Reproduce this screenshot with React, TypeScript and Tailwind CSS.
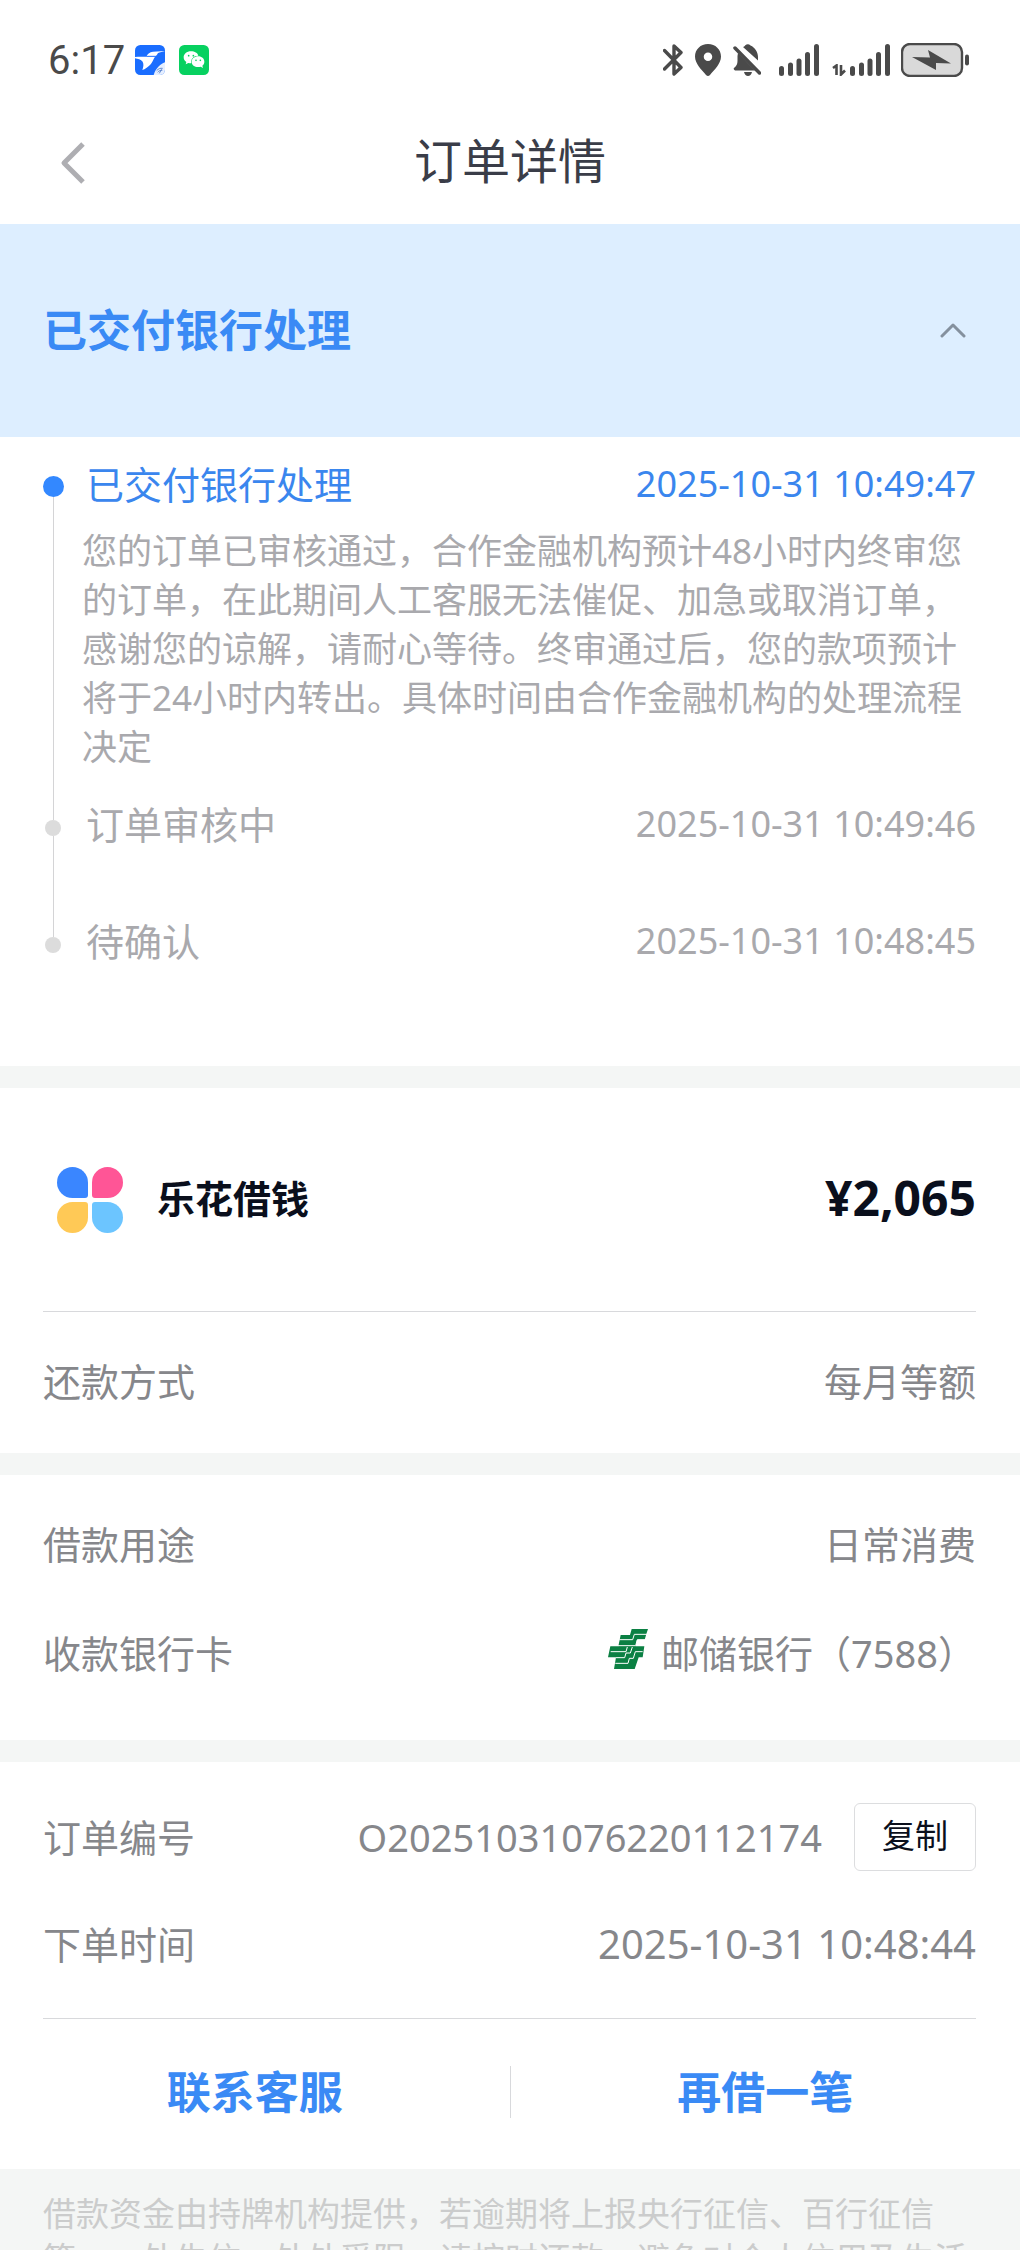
import type { ReactNode } from "react";

const STEPS = [
  {
    title: "已交付银行处理",
    time: "2025-10-31 10:49:47",
    active: true,
    detail:
      "您的订单已审核通过，合作金融机构预计48小时内终审您的订单，在此期间人工客服无法催促、加急或取消订单，感谢您的谅解，请耐心等待。终审通过后，您的款项预计将于24小时内转出。具体时间由合作金融机构的处理流程决定",
  },
  { title: "订单审核中", time: "2025-10-31 10:49:46" },
  { title: "待确认", time: "2025-10-31 10:48:45" },
];

function SignalBars() {
  return (
    <svg width="41" height="32" viewBox="0 0 41 32" fill="#4a4a4a" aria-hidden="true">
      <rect x="0" y="22" width="5" height="10" rx="2.5" />
      <rect x="9" y="18.5" width="5" height="13.5" rx="2.5" />
      <rect x="17.5" y="14.5" width="5" height="17.5" rx="2.5" />
      <rect x="26" y="8" width="5" height="24" rx="2.5" />
      <rect x="35" y="0" width="5" height="32" rx="2.5" />
    </svg>
  );
}

function StatusBar() {
  return (
    <div className="flex h-[120px] items-center justify-between pr-[50px] pl-12">
      <div className="flex items-center">
        <span className="w-[87px] pt-0.5 font-['Roboto',sans-serif] text-[40px] leading-[48px] text-[#4a4a4a]">
          6:17
        </span>
        <svg width="30" height="30" viewBox="0 0 90 90" aria-hidden="true">
          <defs>
            <clipPath id="tile">
              <rect width="90" height="90" rx="16" />
            </clipPath>
          </defs>
          <g clipPath="url(#tile)">
            <rect width="90" height="90" fill="#1a6dff" />
            <path
              d="M0 36C12 35 24 36 34 35C36 27 44 21 54 20L90 18C84 20 74 22 69 24C66 32 58 36 55 44C50 56 40 68 22 75C25 66 27 58 23 50C18 43 8 42 0 40Z"
              fill="#fff"
            />
            <path d="M34 34H64" stroke="#1a6dff" strokeWidth="3" />
            <path d="M90 52C76 57 62 70 56 90H90Z" fill="#e6efff" />
            <path
              d="M65 77C70 71 76 69 83 70M68 82C72 77 77 75 82 76M73 85L80 73"
              fill="none"
              stroke="#4a78c8"
              strokeWidth="2.5"
            />
          </g>
        </svg>
        <svg className="ml-3.5" width="30" height="30" viewBox="0 0 90 90" aria-hidden="true">
          <rect width="90" height="90" rx="16" fill="#07d160" />
          <path
            d="M36 19C23 19 14 27 14 37C14 43 17 48 22 51L20 58L28 54C31 55 34 55 37 55C34 42 44 32 58 32C56 24 47 19 36 19Z"
            fill="#fff"
          />
          <path
            d="M58 34C47 34 38 41 38 50C38 60 47 66 57 66C60 66 63 66 65 65L72 69L70 62C74 59 76 55 76 50C76 41 68 34 58 34Z"
            fill="#fff"
          />
          <g fill="#07d160">
            <circle cx="29" cy="32" r="2.5" />
            <circle cx="43" cy="32" r="2.5" />
            <circle cx="51" cy="46" r="2.5" />
            <circle cx="64" cy="46" r="2.5" />
          </g>
        </svg>
      </div>
      <div className="flex items-center">
        <svg width="20" height="32" viewBox="0 0 20 32" fill="none" stroke="#4a4a4a" aria-hidden="true">
          <path
            d="M1.500 6.500L18 23.500L11 30V2L18 8.500L1.500 25"
            strokeWidth="3.400"
            strokeLinejoin="round"
            strokeLinecap="round"
          />
        </svg>
        <svg className="ml-3" width="26" height="32" viewBox="0 0 26 32" aria-hidden="true">
          <path
            fillRule="evenodd"
            d="M13 0C5.500 0 0 5.500 0 12.500C0 20 7 26 11 31Q13 33 15 31C19 26 26 20 26 12.500C26 5.500 20.500 0 13 0ZM13 8.500A4.200 4.200 0 1 1 13 17A4.200 4.200 0 1 1 13 8.500Z"
            fill="#4a4a4a"
          />
        </svg>
        <svg className="ml-3" width="28" height="32" viewBox="0 0 28 32" fill="#4a4a4a" aria-hidden="true">
          <path d="M10 3C11 2.500 12 2 12 1.500Q15-1 17.500 1.500C22 3.500 25 8 25 13V16.500Z" />
          <path d="M5 9L22 26.500H2Q-0.500 25 1.500 23.500Q4.500 21 4.500 17V12Z" />
          <path d="M11 28H19Q18 32 15 32T11 28Z" />
          <path d="M2 4L26.500 29" stroke="#4a4a4a" strokeWidth="3.500" strokeLinecap="round" />
        </svg>
        <span className="ml-[18px]">
          <SignalBars />
        </span>
        <svg className="ml-3 mt-5" width="14" height="12" viewBox="0 0 14 12" fill="none" stroke="#4a4a4a" aria-hidden="true">
          <path d="M1 4L4.500 1.500V11M9 1V10.500L13 6.500" strokeWidth="2.600" />
        </svg>
        <span className="ml-1">
          <SignalBars />
        </span>
        <svg className="ml-2.5" width="69" height="34" viewBox="0 0 69 34" aria-hidden="true">
          <rect x="1" y="1" width="60" height="32" rx="8" fill="#d9d9d9" stroke="#4a4a4a" strokeWidth="2.400" />
          <path d="M11 14L29 14.500L27 7L50 20.500L35 20L35 27Z" fill="#4a4a4a" />
          <rect x="64" y="11.500" width="4" height="11" rx="2" fill="#4a4a4a" />
        </svg>
      </div>
    </div>
  );
}

function PetalLogo() {
  return (
    <svg width="66" height="66" viewBox="0 0 66 66" aria-hidden="true">
      <path d="M15.500 0A15.500 15.500 0 0 1 31 15.500V28Q31 31 28 31H15.500A15.500 15.500 0 0 1 15.500 0Z" fill="#3a86ff" />
      <path d="M50.500 0A15.500 15.500 0 0 0 35 15.500V28Q35 31 38 31H50.500A15.500 15.500 0 0 0 50.500 0Z" fill="#ff5596" />
      <path d="M15.500 66A15.500 15.500 0 0 0 31 50.500V38Q31 35 28 35H15.500A15.500 15.500 0 0 0 15.500 66Z" fill="#ffc956" />
      <path d="M50.500 66A15.500 15.500 0 0 1 35 50.500V38Q35 35 38 35H50.500A15.500 15.500 0 0 1 50.500 66Z" fill="#6cc5ff" />
    </svg>
  );
}

function PostBankLogo() {
  return (
    <svg width="40" height="40" viewBox="0 0 120 120" aria-hidden="true">
      <path
        d="M71 0H120L115 15L110 32H87L84 46L83 52H109L104 85H92L88 97L80 120H18L24 85H0L7 52H31L38 18H66Z"
        fill="#0b8043"
      />
      <g fill="none" stroke="#fff" strokeWidth="3">
        <path d="M118 16H79L74 32H34" />
        <path d="M112 32H88L83 50H30" />
        <path d="M8 68H54L58 54M73 54L67 72H54L50 86H24" />
        <path d="M104 68H82L76 88H64L60 103H22" />
      </g>
    </svg>
  );
}

function Row({ label, children }: { label: string; children: ReactNode }) {
  return (
    <>
      <dt>{label}</dt>
      <dd className="flex items-center justify-end">{children}</dd>
    </>
  );
}

function Timeline() {
  return (
    <ol className="pt-[21px] pr-11 pl-[43px]">
      {STEPS.map((step, index) => {
        const last = index === STEPS.length - 1;
        return (
          <li
            key={step.title}
            className={`flex gap-[19px] ${step.active ? "text-[#3a86ee]" : last ? "min-h-[151px] text-[#a9a9ad]" : "min-h-[117px] text-[#a9a9ad]"}`}
          >
            <div className="flex w-5 shrink-0 flex-col items-center">
              {step.active ? (
                <>
                  <span className="h-[18px]" />
                  <span className="size-[21px] rounded-full bg-[#3388ff]" />
                </>
              ) : (
                <>
                  <span className="h-[22px] w-px bg-[#d4d4d6]" />
                  <span className="size-4 rounded-full bg-[#dcdcdc]" />
                </>
              )}
              {!last && <span className="w-px flex-1 bg-[#d4d4d6]" />}
            </div>
            <div className="flex-1">
              <div className="flex h-[54px] items-center justify-between pb-0.5 pl-1">
                <h3 className="text-[38px]">{step.title}</h3>
                <time className="text-[36px]">{step.time}</time>
              </div>
              {step.detail && (
                <p className="mt-3.5 pb-[27px] text-[35px] leading-[49px] text-[#a9a9ad]">{step.detail}</p>
              )}
            </div>
          </li>
        );
      })}
    </ol>
  );
}

export default function App() {
  return (
    <div className="flex h-screen flex-col bg-white font-['Noto_Sans','Noto_Sans_CJK_SC',sans-serif] leading-[52px]" lang="zh-CN">
      <StatusBar />
      <header className="grid h-[104px] shrink-0 grid-cols-[1fr_auto_1fr] items-center px-[60px] pb-[22px]">
        <button type="button" aria-label="返回" className="justify-self-start pt-1">
          <svg width="26" height="42" viewBox="0 0 26 42" fill="none" stroke="#aeaeb2" strokeWidth="5" aria-hidden="true">
            <path d="M23 2L4 21L23 40" strokeLinejoin="round" />
          </svg>
        </button>
        <h1 className="text-[48px] text-[#3a3d48]">订单详情</h1>
      </header>

      <main className="min-h-0 flex-1 overflow-y-auto bg-[#f4f6f5] [scrollbar-width:none]">
        <section className="bg-white">
          <button
            type="button"
            aria-expanded="true"
            className="flex h-[213px] w-full items-center justify-between bg-[#ddeeff] pr-[54px] pb-0.5 pl-[43px] text-[#3a8af5]"
          >
            <span className="text-[44px] font-bold">已交付银行处理</span>
            <svg width="26" height="16" viewBox="0 0 26 16" fill="none" stroke="#84909e" strokeWidth="3" aria-hidden="true">
              <path d="M2 14L13 3L24 14" strokeLinecap="round" strokeLinejoin="round" />
            </svg>
          </button>
          <Timeline />
        </section>

        <section className="mt-[22px] bg-white pr-11 pl-[43px] text-[38px] text-[#86878b]">
          <div className="flex h-[224px] items-center border-b border-[#d8d9dc] pl-3.5 text-[#0a0f1c]">
            <PetalLogo />
            <h2 className="ml-[34px] pb-1 font-bold">乐花借钱</h2>
            <strong className="ml-auto pb-1 text-[48px]">¥2,065</strong>
          </div>
          <dl className="grid auto-rows-[141px] grid-cols-[auto_1fr] items-center *:pb-1">
            <Row label="还款方式">每月等额</Row>
          </dl>
        </section>

        <section className="mt-[22px] bg-white pt-[15px] pr-11 pb-8 pl-[43px] text-[38px] text-[#86878b]">
          <dl className="grid auto-rows-[109px] grid-cols-[auto_1fr] items-center *:pb-0.5">
            <Row label="借款用途">日常消费</Row>
            <Row label="收款银行卡">
              <span className="mr-[13px] mb-2">
                <PostBankLogo />
              </span>
              邮储银行（7588）
            </Row>
          </dl>
        </section>

        <section className="mt-[22px] bg-white pt-[22px]">
          <dl className="mr-11 ml-[43px] grid auto-rows-[107px] grid-cols-[auto_1fr] items-center border-b border-[#d8d9dc] pb-5 text-[38px] text-[#86878b] *:pb-0.5">
            <Row label="订单编号">
              O20251031076220112174
              <button
                type="button"
                className="ml-8 h-[68px] w-[122px] rounded-md border border-[#dcdddf] pb-0.5 text-[33px] text-[#0a0f1c]"
              >
                复制
              </button>
            </Row>
            <Row label="下单时间">
              <time className="text-[40px]">2025-10-31 10:48:44</time>
            </Row>
          </dl>
          <div className="flex h-[150px] items-center pb-1 text-[44px] font-bold text-[#3a8af5]">
            <button type="button" className="flex-1">
              联系客服
            </button>
            <span className="h-[52px] w-px bg-[#d8d9dc]" />
            <button type="button" className="flex-1">
              再借一笔
            </button>
          </div>
        </section>

        <footer className="pt-[22px] pr-11 pb-6 pl-[43px] text-[33px] leading-[45px] text-[#cbcccc]">
          借款资金由持牌机构提供，若逾期将上报央行征信、百行征信等，一处失信，处处受限，请按时还款，避免对个人信用及生活
        </footer>
      </main>
    </div>
  );
}
